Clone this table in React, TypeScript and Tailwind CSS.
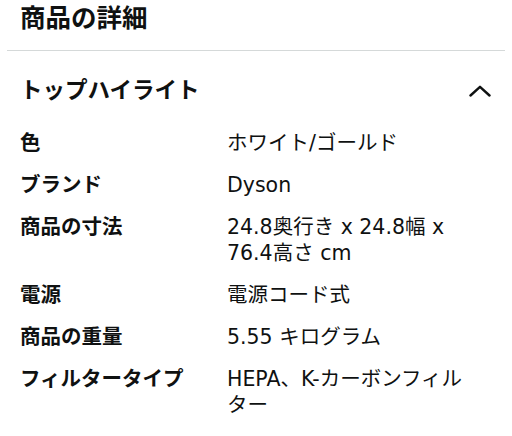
const rows = [
  { label: "色", value: "ホワイト/ゴールド" },
  { label: "ブランド", value: "Dyson" },
  { label: "商品の寸法", value: "24.8奥行き x 24.8幅 x 76.4高さ cm" },
  { label: "電源", value: "電源コード式" },
  { label: "商品の重量", value: "5.55 キログラム" },
  { label: "フィルタータイプ", value: "HEPA、K-カーボンフィルター" },
];

const App = () => {
  return (
    <div className="w-[512px] h-[436px] overflow-hidden bg-white text-[#0f1111] font-['DejaVu_Sans','Noto_Sans_CJK_JP',sans-serif]">
      {/* 見出し */}
      <div className="px-[20px]">
        <h1 className="text-[25.5px] leading-[36px] font-bold mb-[14px]">商品の詳細</h1>
      </div>
      <div className="mx-[7px] border-t border-[#d5d9d9]" />

      {/* トップハイライト */}
      <section className="pl-[20px] pr-[21px]">
        <div className="flex items-center justify-between pt-[24px]">
          <h2 className="text-[22.5px] leading-[30px] font-bold">トップハイライト</h2>
          <svg width="22" height="12" viewBox="0 0 22 12" fill="none" className="mt-[1px]">
            <path d="M1.5 10.5 L11 1.8 L20.5 10.5" stroke="#0f1111" strokeWidth="2.4" strokeLinecap="round" strokeLinejoin="round" />
          </svg>
        </div>

        <div className="flex flex-col gap-[16px] pt-[25px]">
          {rows.map((row) => (
            <div key={row.label} className="flex text-[20.5px] leading-[26px]">
              <div className="w-[207px] shrink-0 font-bold">{row.label}</div>
              <div className="w-[240px]">{row.value}</div>
            </div>
          ))}
        </div>
      </section>
    </div>
  );
};

export default App;
